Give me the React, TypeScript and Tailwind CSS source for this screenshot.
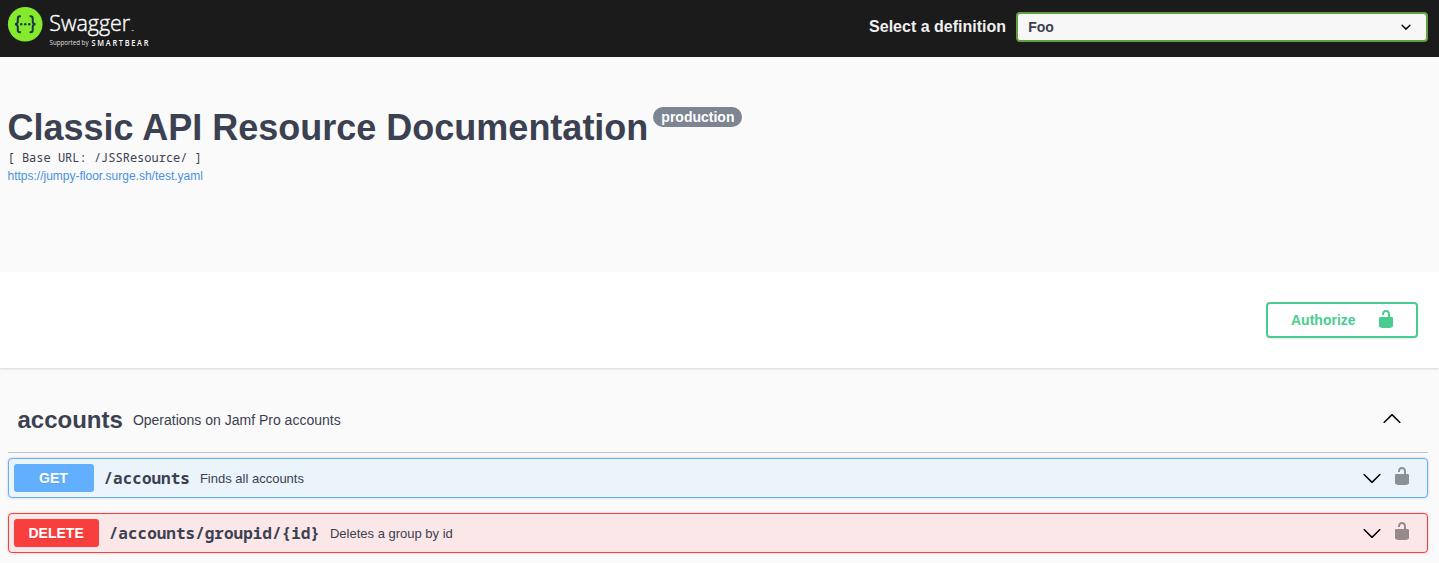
import React from "react";

const mono = "font-['Noto_Sans_Mono','Droid_Sans_Mono','Noto_Sans_Mono_CJK_SC','DejaVu_Sans_Mono',monospace]";

function Unlocked({ className = "" }: { className?: string }) {
  return (
    <svg viewBox="0 0 20 20" className={`h-5 w-5 shrink-0 ${className}`} fill="currentColor">
      <path d="M15.8 8H14V5.6C14 2.703 12.665 1 10 1 7.334 1 6 2.703 6 5.6V6h2v-.801C8 3.754 8.797 3 10 3c1.203 0 2 .754 2 2.199V8H4c-.553 0-1 .646-1 1.199V17c0 .549.428 1.139.951 1.307l1.197.387C5.672 18.861 6.55 19 7.1 19h5.8c.549 0 1.428-.139 1.951-.307l1.196-.387c.524-.167.953-.757.953-1.306V9.199C17 8.646 16.352 8 15.8 8z" />
    </svg>
  );
}

function Arrow({ className = "" }: { className?: string }) {
  return (
    <svg viewBox="0 0 20 20" className={`h-5 w-5 shrink-0 text-black ${className}`} fill="currentColor">
      <path d="M17.418 14.908c.272.268.709.268.979 0s.271-.701 0-.969l-7.908-7.83c-.27-.268-.707-.268-.979 0l-7.908 7.83c-.27.268-.27.701 0 .969.271.268.709.268.979 0L10 7.767l7.418 7.141z" />
    </svg>
  );
}

function Logo() {
  return (
    <svg width="150" height="57" viewBox="0 0 150 57" className="block shrink-0">
      <circle cx="25.2" cy="24.2" r="17.3" fill="#85ea2d" />
      <g fill="none" stroke="#173647" strokeWidth="2">
        <path d="M20.9 16.2h-1q-2.1 0-2.1 2.2v2.9q0 2.8-2.8 2.9 2.8.1 2.8 2.9V30q0 2.2 2.1 2.2h1" />
        <path d="M29.6 16.2h1q2.1 0 2.1 2.2v2.9q0 2.8 2.8 2.9-2.8.1-2.8 2.9V30q0 2.2-2.1 2.2h-1" />
      </g>
      <g fill="#173647">
        <circle cx="21.2" cy="24.2" r="1.2" />
        <circle cx="25.25" cy="24.2" r="1.2" />
        <circle cx="29.3" cy="24.2" r="1.2" />
      </g>
      <g fill="#fff" className="font-['Open_Sans',sans-serif]">
        <text x="49.2" y="31.2" fontSize="22.5" fontWeight="300" stroke="#fff" strokeWidth="0.4" textLength="81" lengthAdjust="spacingAndGlyphs">Swagger</text>
        <text x="49.5" y="45.4" fontSize="6.5" opacity=".85" textLength="39" lengthAdjust="spacingAndGlyphs">Supported by</text>
        <g transform="translate(91.6 45.6) scale(0.86 1)">
          <text fontSize="8.6" fontWeight="600" textLength="66" lengthAdjust="spacing">SMARTBEAR</text>
        </g>
        <rect x="131.5" y="30.2" width="2.3" height="0.8" opacity=".7" />
      </g>
    </svg>
  );
}

type OperationProps = { method: string; path: string; summary: string; box: string; badge: string };

function Operation({ method, path, summary, box, badge }: OperationProps) {
  return (
    <div className={`flex h-10 items-center rounded border px-[5px] shadow-[0_0_3px_rgba(0,0,0,0.19)] ${box}`}>
      <span className={`flex h-7 min-w-20 items-center justify-center rounded-[3px] px-[15px] text-sm font-bold text-white [text-shadow:0_1px_0_rgba(0,0,0,0.1)] ${badge}`}>
        {method}
      </span>
      <span className={`px-2.5 text-base font-bold ${mono}`}>{path}</span>
      <span className="grow pt-px text-[13px] leading-5">{summary}</span>
      <Arrow className="mt-0.5 mr-2.5 rotate-180" />
      <Unlocked className="mr-[10px] mb-1 text-black opacity-40" />
    </div>
  );
}

export default function App() {
  return (
    <div className="min-h-[563px] overflow-hidden bg-[#fafafa] font-['Liberation_Sans',Arial,sans-serif] text-[#3b4151]">
      <header className="flex h-[57px] items-start justify-between bg-[#1b1b1b] pr-[11px]">
        <Logo />
        <label className="flex items-center pt-3">
          <span className="pr-[10px] text-base font-bold text-[#f0f0f0]">Select a definition</span>
          <span className="flex h-[30px] w-[412px] items-center justify-between rounded border-2 border-[#62a03f] bg-[#f7f7f7] pr-[10px] pl-[10.25px] text-sm font-bold">
            Foo
            <svg viewBox="0 0 20 20" className="h-5 w-5" fill="#000">
              <path d="M13.418 7.859a.695.695 0 0 1 .978 0 .68.68 0 0 1 0 .969l-3.908 3.83a.697.697 0 0 1-.979 0l-3.908-3.83a.68.68 0 0 1 0-.969.695.695 0 0 1 .978 0L10 11z" />
            </svg>
          </span>
        </label>
      </header>

      <section className="h-[215px] px-[7.5px] pt-[50px]">
        <div className="flex h-[42px] items-start">
          <h2 className="text-4xl leading-[41px] font-bold">Classic API Resource Documentation</h2>
          <span className="ml-[5px] flex h-5 items-center rounded-full bg-[#7d8492] px-2 text-sm font-bold text-white">
            production
          </span>
        </div>
        <pre className={`text-xs leading-[18px] ${mono}`}>[ Base URL: /JSSResource/ ]</pre>
        <a className="block text-xs leading-[18px] text-[#4990e2]">https://jumpy-floor.surge.sh/test.yaml</a>
      </section>

      <section className="relative flex h-24 items-center justify-end bg-white pr-[21px] shadow-[0_1px_2px_rgba(0,0,0,0.15)]">
        <button className="flex h-9 w-[152px] items-center justify-between rounded border-2 border-[#49cc90] pr-5 pl-[23px] text-sm font-bold text-[#49cc90] shadow-[0_1px_2px_rgba(0,0,0,0.1)]">
          Authorize
          <Unlocked className="mb-0.5" />
        </button>
      </section>

      <main className="pt-[19px] pr-[11px] pl-[7.5px]">
        <div className="mb-[5px] flex h-[66px] items-center border-b border-[#3b4151]/30 pr-[26px] pl-[10px]">
          <h3 className="text-2xl font-bold">accounts</h3>
          <span className="grow pl-2.5 text-sm">Operations on Jamf Pro accounts</span>
          <Arrow className="mb-[3px]" />
        </div>
        <div className="flex flex-col gap-[15px]">
          <Operation method="GET" path="/accounts" summary="Finds all accounts" box="border-[#61affe] bg-[#ebf3fb]" badge="bg-[#61affe]" />
          <Operation method="DELETE" path="/accounts/groupid/{id}" summary="Deletes a group by id" box="border-[#f93e3e] bg-[#fbe7e7]" badge="bg-[#f93e3e]" />
        </div>
      </main>
    </div>
  );
}
